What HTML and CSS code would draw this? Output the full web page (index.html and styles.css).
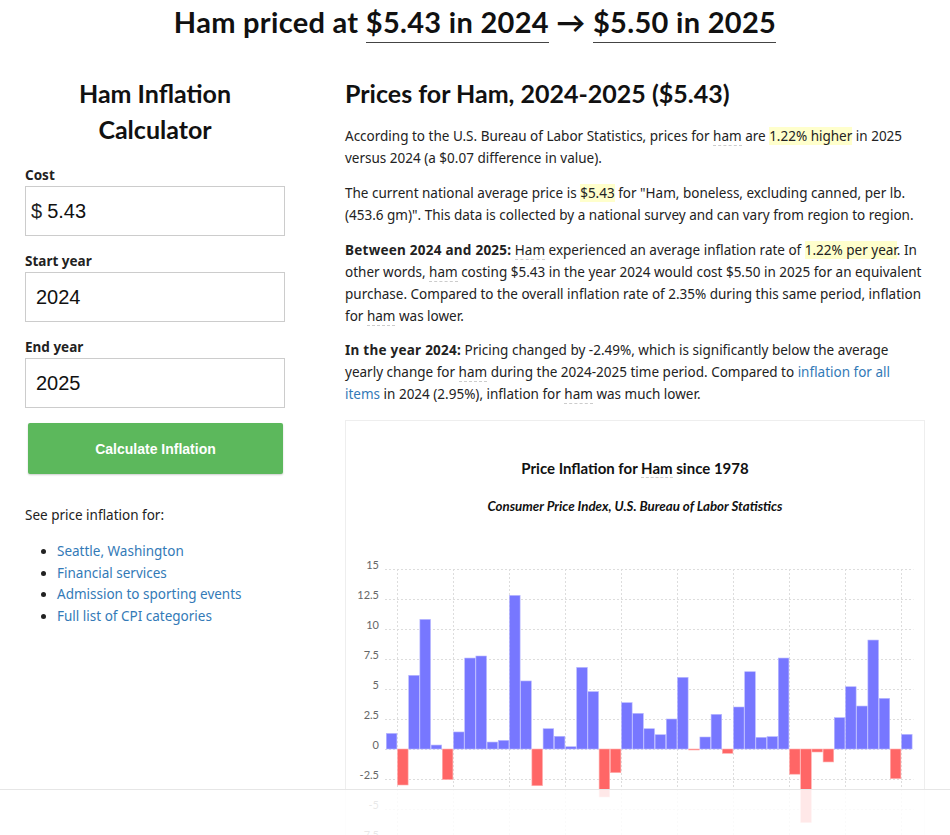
FILE: index.html
```html
<!DOCTYPE html>
<html lang="en">
<head>
    <meta charset="UTF-8">
    <meta name="viewport" content="width=device-width, initial-scale=1.0">
    <title>Ham Inflation Calculator</title>
    <link rel="stylesheet" href="styles.css">
</head>
<body>
    <h1 class="page-title">Ham priced at <span class="title-amount">$5.43 in 2024</span> &rarr; <span class="title-amount">$5.50 in 2025</span></h1>

    <div class="layout">
        <aside class="calc">
            <h2 class="calc-title">Ham Inflation Calculator</h2>
            <label class="calc-label">Cost</label>
            <div class="calc-field">
                <span class="calc-prefix">$</span>
                <input type="text" class="calc-input calc-input-cost" value="5.43">
            </div>
            <label class="calc-label">Start year</label>
            <div class="calc-field">
                <input type="text" class="calc-input" value="2024">
            </div>
            <label class="calc-label">End year</label>
            <div class="calc-field">
                <input type="text" class="calc-input" value="2025">
            </div>
            <button class="calc-button">Calculate Inflation</button>

            <p class="related-intro">See price inflation for:</p>
            <ul class="related-list">
                <li><a href="#">Seattle, Washington</a></li>
                <li><a href="#">Financial services</a></li>
                <li><a href="#">Admission to sporting events</a></li>
                <li><a href="#">Full list of CPI categories</a></li>
            </ul>
        </aside>

        <main class="content">
            <h2 class="content-title">Prices for Ham, 2024-2025 ($5.43)</h2>
            <p>According to the U.S. Bureau of Labor Statistics, prices for <span class="term">ham</span> are <span class="highlight">1.22% higher</span> in 2025 versus 2024 (a $0.07 difference in value).</p>
            <p>The current national average price is <span class="highlight">$5.43</span> for "Ham, boneless, excluding canned, per lb. (453.6 gm)". This data is collected by a national survey and can vary from region to region.</p>
            <p><strong>Between 2024 and 2025:</strong> <span class="term">Ham</span> experienced an average inflation rate of <span class="highlight">1.22% per year</span>. In other words, <span class="term">ham</span> costing $5.43 in the year 2024 would cost $5.50 in 2025 for an equivalent purchase. Compared to the overall inflation rate of 2.35% during this same period, inflation for <span class="term">ham</span> was lower.</p>
            <p><strong>In the year 2024:</strong> Pricing changed by -2.49%, which is significantly below the average yearly change for <span class="term">ham</span> during the 2024-2025 time period. Compared to <a href="#">inflation for all items</a> in 2024 (2.95%), inflation for <span class="term">ham</span> was much lower.</p>

            <div class="chart-card">
                <div class="chart-title">Price Inflation for <span class="term">Ham</span> since 1978</div>
                <div class="chart-subtitle">Consumer Price Index, U.S. Bureau of Labor Statistics</div>
                <svg id="chart" class="chart-plot" width="578" height="300" viewBox="0 0 578 300"></svg>
            </div>
        </main>
    </div>

    <div class="fade-bar"></div>

    <script>
        // Yearly change in percent, 1978 onward
        const values = [
            1.3, -3.0, 6.14, 10.8, 0.33, -2.55, 1.42, 7.58, 7.75, 0.58,
            0.72, 12.8, 5.67, -3.06, 1.69, 1.06, 0.19, 6.8, 4.78, -4.0,
            -1.97, 3.86, 2.97, 1.69, 1.19, 2.5, 5.97, -0.08, 1.0, 2.89,
            -0.36, 3.5, 6.44, 0.97, 1.03, 7.58, -2.1, -6.14, -0.25, -1.08,
            2.61, 5.19, 3.58, 9.08, 4.22, -2.47, 1.22
        ];

        const svg = document.getElementById('chart');
        const ns = 'http://www.w3.org/2000/svg';
        const zeroY = 195;
        const unit = 12;
        const left = 40;
        const pitch = 11.2;
        const right = left + pitch * values.length;

        function add(tag, attrs, text) {
            const el = document.createElementNS(ns, tag);
            for (const key in attrs) el.setAttribute(key, attrs[key]);
            if (text !== undefined) el.textContent = text;
            svg.appendChild(el);
            return el;
        }

        // Horizontal grid lines and y labels
        for (let v = 15; v >= -10; v -= 2.5) {
            const y = zeroY - v * unit + 0.5;
            add('line', { x1: left - 1, x2: right + 1, y1: y, y2: y, class: 'grid' });
            add('text', { x: 33, y: y - 0.5, class: 'axis-label' }, String(v));
        }

        // Vertical grid lines every 5 years
        for (let i = 1; i < values.length; i += 5) {
            const x = Math.round(left + pitch * i) + 0.5;
            add('line', { x1: x, x2: x, y1: zeroY - 15 * unit, y2: 300, class: 'grid' });
        }

        // Bars
        values.forEach((v, i) => {
            const x = left + pitch * i + 0.3;
            const h = Math.abs(v) * unit;
            add('rect', {
                x: x,
                y: v >= 0 ? zeroY - h : zeroY,
                width: pitch - 0.6,
                height: Math.max(h, 1),
                class: v >= 0 ? 'bar-up' : 'bar-down'
            });
        });
    </script>
</body>
</html>
```

FILE: styles.css
```css
body {
    margin: 0;
    font-family: "Noto Sans", "Open Sans", sans-serif;
    font-size: 13.5px;
    color: #222;
}

a {
    color: #337ab7;
    text-decoration: none;
}

strong {
    letter-spacing: 0.25px;
}

.page-title {
    margin: 0;
    padding-top: 3px;
    text-align: center;
    font-family: Lato, sans-serif;
    font-size: 29px;
    line-height: 38px;
    letter-spacing: 0.3px;
    color: #111;
}

.title-amount {
    display: inline-block;
    line-height: 28px;
    padding-bottom: 6px;
    border-bottom: 1px solid #444;
}

.layout {
    display: flex;
    gap: 60px;
    padding: 32px 25px 60px;
}

.calc {
    width: 260px;
    flex-shrink: 0;
}

.calc-title {
    margin: 0 0 18px;
    text-align: center;
    font-family: Lato, sans-serif;
    font-size: 25px;
    line-height: 36px;
    color: #111;
}

.calc-label {
    display: block;
    font-weight: bold;
    line-height: 20px;
    margin-bottom: 1px;
}

.calc-field {
    display: flex;
    align-items: center;
    height: 48px;
    border: 1px solid #ccc;
    margin-bottom: 15px;
    font-family: "Liberation Sans", Arial, sans-serif;
    font-size: 20px;
}

.calc-prefix {
    padding-left: 5px;
}

.calc-input {
    border: none;
    outline: none;
    width: 100%;
    padding: 0 10px;
    font-family: "Liberation Sans", Arial, sans-serif;
    font-size: 20px;
    color: #111;
    background: none;
}

.calc-input-cost {
    padding-left: 5px;
}

.calc-button {
    display: block;
    width: 255px;
    height: 51px;
    margin: 0 0 0 3px;
    border: none;
    border-radius: 2px;
    background: #5cb85c;
    color: #fff;
    font-family: "Liberation Sans", Arial, sans-serif;
    font-size: 14px;
    font-weight: bold;
    box-shadow: 0 1px 2px rgba(0, 0, 0, 0.2);
}

.related-intro {
    margin: 30px 0 15px;
    line-height: 22px;
}

.related-list {
    margin: 0;
    padding-left: 32px;
    line-height: 21.7px;
}

.content {
    flex: 1;
    min-width: 0;
}

.content-title {
    margin: 0 0 14px;
    font-family: Lato, sans-serif;
    font-size: 25px;
    line-height: 36px;
    color: #111;
}

.content p {
    margin: 0 0 12.8px;
    line-height: 22px;
}

.highlight {
    background: #ffffcc;
}

.term {
    border-bottom: 1px dashed #ccc;
}

.chart-card {
    margin-top: 14.5px;
    border: 1px solid #eee;
    padding-top: 37px;
    text-align: center;
    font-family: Lato, sans-serif;
}

.chart-title {
    font-weight: bold;
    font-size: 15px;
    line-height: 20px;
    color: #111;
}

.chart-subtitle {
    margin-top: 19px;
    font-size: 13.3px;
    font-weight: bold;
    font-style: italic;
    line-height: 18px;
    color: #111;
}

.chart-plot {
    display: block;
    margin-top: 39px;
}

.chart-plot .grid {
    stroke: #ddd;
    stroke-width: 1;
    stroke-dasharray: 2 2;
}

.chart-plot .axis-label {
    font-family: Lato, sans-serif;
    font-size: 11px;
    fill: #666;
    text-anchor: end;
}

.chart-plot .bar-up {
    fill: #7777ff;
    stroke: #b8b8ff;
    stroke-width: 0.6;
}

.chart-plot .bar-down {
    fill: #ff6666;
    stroke: #ffb0b0;
    stroke-width: 0.6;
}

.fade-bar {
    position: fixed;
    left: 0;
    right: 0;
    bottom: 0;
    height: 45px;
    border-top: 1px solid #e6e6e6;
    background: rgba(255, 255, 255, 0.85);
}
```
